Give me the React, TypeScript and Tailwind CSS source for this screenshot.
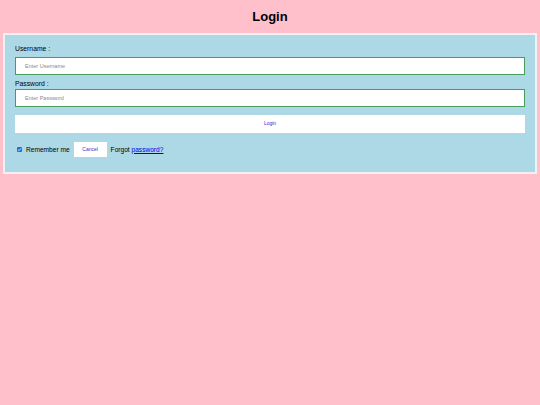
import React from "react";

export default function App() {
  return (
    <div className="min-h-[405px] w-[540px] bg-[#ffc0cb] font-['Liberation_Sans',Arial,sans-serif] text-black">
      <div className="flex h-[33px] items-center justify-center">
        <h1 className="text-[13px] font-bold leading-none">Login</h1>
      </div>
      <form
        className="mx-[3px] flex flex-col border-2 border-[#f1f1f1] bg-[#add8e6] px-[10px] pb-[15px] pt-[10px]"
        onSubmit={(e) => e.preventDefault()}
      >
        <label className="h-[8px] text-[6.8px] leading-[8px]">Username :</label>
        <input
          type="text"
          placeholder="Enter Username"
          className="mt-[4px] h-[18px] w-full border border-[#4a9a5e] bg-white pl-[9px] text-[5.5px] outline-none placeholder:text-[#8a8a8a]"
        />
        <label className="mt-[5px] h-[8px] text-[6.8px] leading-[8px]">Password :</label>
        <input
          type="password"
          placeholder="Enter Password"
          className="mt-[1px] h-[18px] w-full border border-[#4a9a5e] bg-white pl-[9px] text-[5.5px] outline-none placeholder:text-[#8a8a8a]"
        />
        <button
          type="submit"
          className="mt-[8px] flex h-[18px] w-full items-center justify-center bg-white text-[5px] text-[#3333cc]"
        >
          Login
        </button>
        <div className="mt-[9px] flex h-[15px] items-center text-[6.6px]">
          <span className="ml-[2px] flex h-[5px] w-[5px] items-center justify-center rounded-[1px] bg-[#1a6fe0]">
            <svg viewBox="0 0 10 10" className="h-[5px] w-[5px]">
              <path d="M2 5.2 L4.2 7.3 L8 2.8" fill="none" stroke="white" strokeWidth="1.6" />
            </svg>
          </span>
          <span className="ml-[4px]">Remember me</span>
          <button
            type="button"
            className="ml-[4px] flex h-[15px] w-[33px] items-center justify-center bg-white text-[5px] text-[#3333cc]"
          >
            Cancel
          </button>
          <span className="ml-[4px]">
            Forgot{" "}
            <a href="#" className="text-[#0000ee] underline">
              password?
            </a>
          </span>
        </div>
      </form>
    </div>
  );
}
